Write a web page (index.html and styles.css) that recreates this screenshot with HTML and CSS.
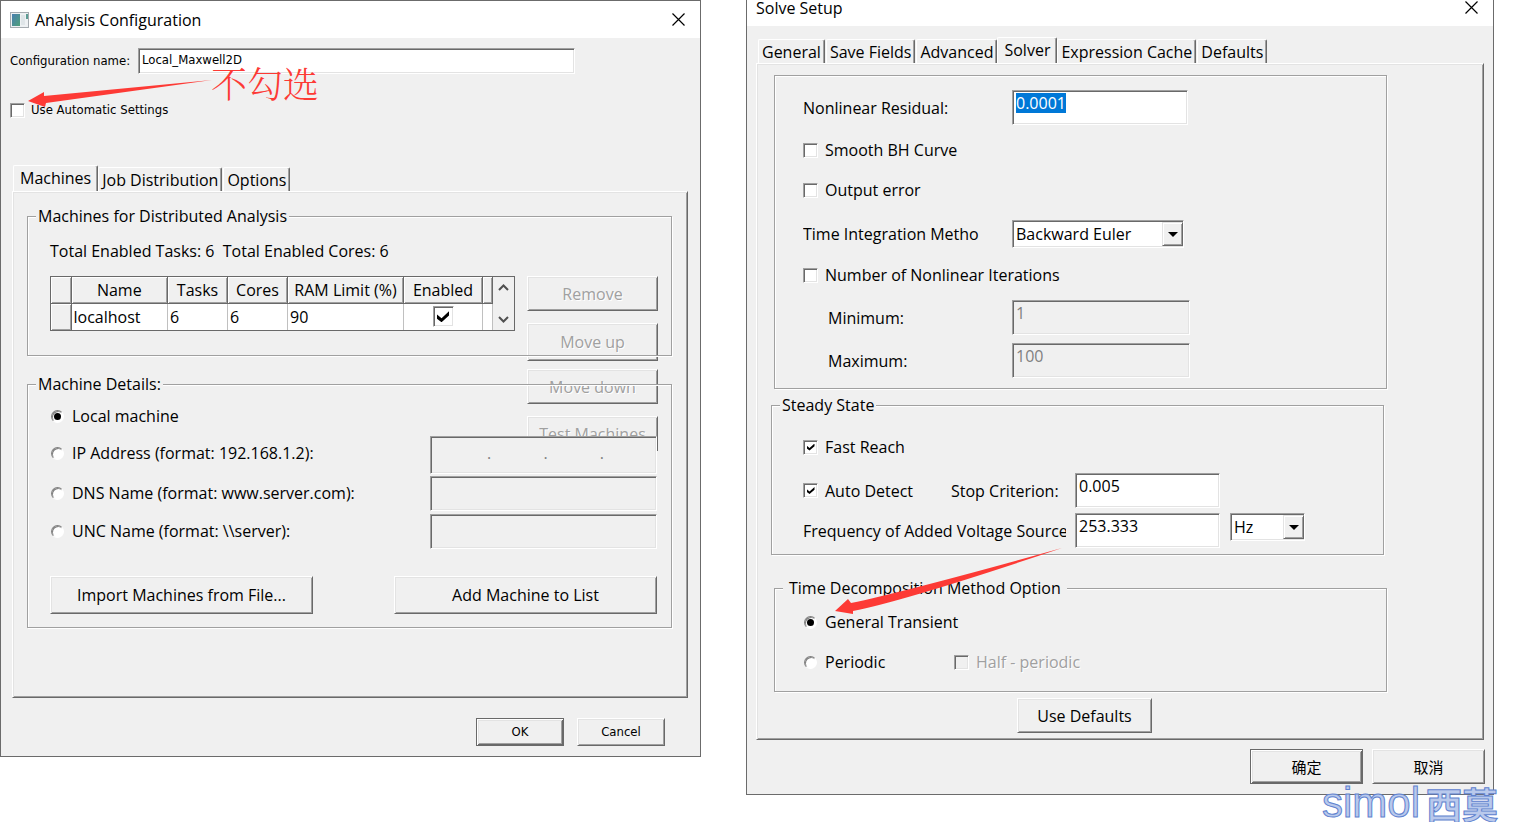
FILE: index.html
```html
<!DOCTYPE html>
<html lang="en">
<head>
<meta charset="utf-8">
<title>Analysis Configuration and Solve Setup</title>
<link rel="stylesheet" href="styles.css">
</head>
<body>
<main class="desktop">
  <section class="dialog dialog-analysis" aria-label="Analysis Configuration">
    <header class="titlebar">
      <svg class="app-icon" width="19" height="16" viewBox="0 0 19 16" aria-hidden="true">
        <defs><linearGradient id="scr" x1="0" y1="0" x2="1" y2="1"><stop offset="0" stop-color="#4a7fb0"/><stop offset="1" stop-color="#4fa07a"/></linearGradient></defs>
        <rect x="0.5" y="0.5" width="18" height="15" fill="#eef1f3" stroke="#a5abb0"/>
        <rect x="2" y="2" width="8" height="12" fill="url(#scr)"/>
        <rect x="11" y="3" width="4" height="10" fill="#dfe5e8"/>
        <rect x="16" y="2" width="2" height="5" fill="#5c9c94"/>
      </svg>
      <h1 class="title">Analysis Configuration</h1>
      <button class="close" type="button" aria-label="Close"><svg width="13" height="13" viewBox="0 0 13 13"><path d="M.5.5l12 12M12.5.5l-12 12" stroke="#000" stroke-width="1.2"/></svg></button>
    </header>
    <div class="small config-row">
      <label class="config-label" for="cfg">Configuration name:</label>
      <input class="sunken config-input" id="cfg" type="text" value="Local_Maxwell2D">
    </div>
    <label class="small check auto-row"><input type="checkbox">Use Automatic Settings</label>
    <div class="tabs" role="tablist">
      <button class="tab selected" type="button" role="tab">Machines</button>
      <button class="tab" type="button" role="tab">Job Distribution</button>
      <button class="tab" type="button" role="tab">Options</button>
    </div>
    <div class="panel machines-panel">
      <fieldset class="group machines-group">
        <legend>Machines for Distributed Analysis</legend>
        <p class="totals">Total Enabled Tasks: 6&nbsp; Total Enabled Cores: 6</p>
        <div class="machines-row">
          <div class="grid-box">
            <table class="machines">
              <colgroup><col class="c-head"><col><col class="c-num"><col class="c-num"><col class="c-ram"><col class="c-en"><col class="c-rest"></colgroup>
              <thead><tr><th></th><th>Name</th><th>Tasks</th><th>Cores</th><th>RAM Limit (%)</th><th>Enabled</th><th></th></tr></thead>
              <tbody><tr><th></th><td>localhost</td><td>6</td><td>6</td><td>90</td><td class="mid"><input class="big" type="checkbox" checked aria-label="Enabled"></td><td></td></tr></tbody>
            </table>
            <div class="scroll">
              <svg width="11" height="7" viewBox="0 0 11 7" aria-hidden="true"><path d="M1 6l4.500-4.500L10 6" fill="none" stroke="#505050" stroke-width="2"/></svg>
              <svg width="11" height="7" viewBox="0 0 11 7" aria-hidden="true"><path d="M1 1l4.500 4.500L10 1" fill="none" stroke="#505050" stroke-width="2"/></svg>
            </div>
          </div>
          <div class="side-buttons">
            <button class="btn" type="button" disabled>Remove</button>
            <button class="btn move-up" type="button" disabled>Move up</button>
            <button class="btn" type="button" disabled>Move down</button>
            <button class="btn" type="button" disabled>Test Machines</button>
          </div>
        </div>
      </fieldset>
      <fieldset class="group details-group">
        <legend>Machine Details:</legend>
        <label class="check local-row"><input type="radio" name="m" checked>Local machine</label>
        <div class="details">
          <label class="check"><input type="radio" name="m">IP Address (format: 192.168.1.2):</label>
          <div class="sunken off ip" role="group" aria-label="IP address">
            <input type="text" disabled aria-label="Part 1"><span>.</span><input type="text" disabled aria-label="Part 2"><span>.</span><input type="text" disabled aria-label="Part 3"><span>.</span><input type="text" disabled aria-label="Part 4">
          </div>
          <label class="check"><input type="radio" name="m">DNS Name (format: www.server.com):</label>
          <input class="sunken off" type="text" disabled aria-label="DNS name">
          <label class="check"><input type="radio" name="m">UNC Name (format: \\server):</label>
          <input class="sunken off" type="text" disabled aria-label="UNC name">
        </div>
        <div class="detail-buttons">
          <button class="btn" type="button">Import Machines from File...</button>
          <button class="btn" type="button">Add Machine to List</button>
        </div>
      </fieldset>
    </div>
    <footer class="small footer">
      <button class="btn default" type="button">OK</button>
      <button class="btn" type="button">Cancel</button>
    </footer>
    <svg class="arrow arrow-auto" width="186" height="32" viewBox="0 0 186 32" aria-hidden="true"><path d="M1 24L17 15V19L185 3L19 26L18 30Z" fill="#fd3a35"/></svg>
    <span class="note" lang="zh">不勾选</span>
  </section>

  <section class="dialog dialog-solve" aria-label="Solve Setup">
    <header class="titlebar">
      <h1 class="title">Solve Setup</h1>
      <button class="close" type="button" aria-label="Close"><svg width="13" height="13" viewBox="0 0 13 13"><path d="M.5.5l12 12M12.500.5l-12 12" stroke="#000" stroke-width="1.2"/></svg></button>
    </header>
    <div class="tabs" role="tablist">
      <button class="tab" type="button" role="tab">General</button>
      <button class="tab" type="button" role="tab">Save Fields</button>
      <button class="tab" type="button" role="tab">Advanced</button>
      <button class="tab selected" type="button" role="tab">Solver</button>
      <button class="tab" type="button" role="tab">Expression Cache</button>
      <button class="tab" type="button" role="tab">Defaults</button>
    </div>
    <div class="panel solver-panel">
      <div class="group solver-group">
        <div class="field-row"><label for="res">Nonlinear Residual:</label><input class="sunken highlighted" id="res" type="text" value="0.0001"></div>
        <label class="check line first"><input type="checkbox">Smooth BH Curve</label>
        <label class="check line"><input type="checkbox">Output error</label>
        <div class="field-row method-row"><label class="cut" for="tim">Time Integration Method:</label>
          <div class="sunken combo"><select id="tim"><option>Backward Euler</option></select><span class="drop"></span></div></div>
        <label class="check iterations"><input type="checkbox">Number of Nonlinear Iterations</label>
        <div class="field-row nested"><label for="mn">Minimum:</label><input class="sunken off" id="mn" type="text" value="1" disabled></div>
        <div class="field-row nested"><label for="mx">Maximum:</label><input class="sunken off" id="mx" type="text" value="100" disabled></div>
      </div>
      <fieldset class="group steady-group">
        <legend>Steady State</legend>
        <label class="check line"><input type="checkbox" checked>Fast Reach</label>
        <div class="steady">
          <div class="steady-left"><label class="check"><input type="checkbox" checked>Auto Detect</label><label for="stop">Stop Criterion:</label></div>
          <input class="sunken" id="stop" type="text" value="0.005"><span></span>
          <label class="cut" for="freq">Frequency of Added Voltage Source:</label>
          <input class="sunken" id="freq" type="text" value="253.333">
          <div class="sunken combo"><select aria-label="Unit"><option>Hz</option></select><span class="drop"></span></div>
        </div>
      </fieldset>
      <fieldset class="group time-group">
        <legend>Time Decomposition Method Option</legend>
        <label class="check line"><input type="radio" name="t" checked>General Transient</label>
        <div class="periodic line">
          <label class="check"><input type="radio" name="t">Periodic</label>
          <label class="check disabled"><input type="checkbox" disabled>Half - periodic</label>
        </div>
      </fieldset>
      <button class="btn use-defaults" type="button">Use Defaults</button>
    </div>
    <footer class="footer" lang="zh">
      <button class="btn default" type="button">确定</button>
      <button class="btn" type="button">取消</button>
    </footer>
    <svg class="arrow arrow-general" width="230" height="68" viewBox="0 0 230 68" aria-hidden="true"><path d="M2 63L15 51L18 55Q75 43 229 0Q75 52 20 63L20 66Z" fill="#fd3a35"/></svg>
    <div class="watermark"><span class="wm-latin">simol</span><span class="wm-han" lang="zh">西莫</span></div>
  </section>
</main>
</body>
</html>
```
FILE: styles.css
```css
* { box-sizing: border-box; }

body {
  margin: 0;
  min-height: 100vh;
  background: #fff;
  color: #000;
  font: 16px/20px "Open Sans", "Noto Sans CJK SC", sans-serif;
}

button, input, select { font: inherit; color: inherit; margin: 0; border-radius: 0; }

.desktop {
  display: grid;
  grid-template-columns: minmax(0, 701fr) minmax(0, 748fr);
  column-gap: 45px;
  align-items: start;
  padding-right: 22px;
}

.dialog {
  position: relative;
  border: 1px solid #6b6b6b;
  background: #f0f0f0;
}
.dialog-analysis { padding-bottom: 10px; }
.dialog-solve { border-top: 0; padding-bottom: 10px; }

.titlebar {
  display: flex;
  align-items: center;
  background: #fff;
  height: 37px;
  padding: 0 15px 0 9px;
}
.dialog-solve .titlebar { height: 26px; align-items: flex-start; }
.dialog-solve .title { line-height: 16px; }
.app-icon { margin-right: 6px; }
.title { margin: 0; font-size: 16px; font-weight: 400; flex: 1; }
.close { display: flex; padding: 0; border: 0; background: none; }
.dialog-solve .close { padding-top: 1px; }

/* Bevels */
.sunken, input[type="checkbox"] {
  border: 1px solid;
  border-color: #a0a0a0 #fff #fff #a0a0a0;
  box-shadow: inset 1px 1px #696969, inset -1px -1px #e3e3e3;
  background: #fff;
}
.sunken { width: 100%; min-width: 0; outline: 0; height: 35px; padding: 0 3px 9px; }
.sunken.off { background: #f0f0f0; color: #808080; }

.btn, .panel {
  border: 1px solid;
  border-color: #fff #696969 #696969 #fff;
  box-shadow: inset 1px 1px #e3e3e3, inset -1px -1px #a0a0a0;
  background: #f0f0f0;
}
.btn { padding: 0; }
.btn.default {
  border-color: #696969;
  box-shadow: inset 1px 1px #fff, inset -1px -1px #696969, inset 2px 2px #e3e3e3, inset -2px -2px #a0a0a0;
}
.btn:disabled, .disabled { color: #a0a0a0; text-shadow: 1px 1px #fff; }

/* Check boxes and radios */
.check { display: flex; align-items: center; }
input[type="checkbox"], input[type="radio"] {
  appearance: none;
  display: grid;
  place-items: center;
  flex: none;
  width: 15px;
  height: 15px;
  margin-right: 7px;
}
input[type="checkbox"]:disabled { background: #f0f0f0; }
input[type="checkbox"]:checked::before {
  content: "";
  width: 8px;
  height: 7px;
  background: #000;
  clip-path: polygon(0 30%, 38% 64%, 100% 0, 100% 38%, 38% 100%, 0 68%);
}
input.big { width: 21px; height: 21px; margin: 0 auto; }
input.big:checked::before { width: 12px; height: 11px; }
input[type="radio"] {
  width: 13px;
  height: 13px;
  margin: 0 8px 0 1px;
  border: 1px solid;
  border-color: #808080 #fff #fff #808080;
  border-radius: 50%;
  box-shadow: inset 1px 1px #808080;
  background: #fff;
}
input[type="radio"]:checked::before {
  content: "";
  width: 7px;
  height: 7px;
  border-radius: 50%;
  background: #000;
}

/* Tabs */
.tabs { display: flex; align-items: flex-end; }
.tab {
  height: 24px;
  padding: 0 3px;
  border: 1px solid;
  border-color: #fff #696969 #f0f0f0 #fff;
  border-bottom: 0;
  border-radius: 2px 2px 0 0;
  box-shadow: inset -1px 0 #a0a0a0;
  background: #f0f0f0;
  white-space: nowrap;
}
.tab + .tab { margin-left: 1px; }
.tab.selected { position: relative; height: 28px; margin: 0 0 -2px; padding: 0 6px 4px; }
.tab.selected + .tab { margin-left: 0; }

.panel { isolation: isolate; }

/* Group boxes */
.group {
  min-width: 0;
  margin: 0;
  border: 1px solid #a0a0a0;
  box-shadow: 1px 1px #fff, inset 1px 1px #fff;
}
.group legend { height: 20px; padding: 0 2px; background: #f0f0f0; }

/* Analysis Configuration */
.small { font: 13px/16px "DejaVu Sans Condensed", "DejaVu Sans", sans-serif; }
.config-row { display: flex; align-items: center; padding: 10px 125px 0 9px; }
.config-label { width: 128px; flex: none; }
.config-input { height: 26px; padding: 0 3px 3px; }
.auto-row { margin: 28px 9px 0; }
.auto-row input { margin-right: 6px; }
.dialog-analysis .tabs { padding: 47px 12px 0; }
.machines-panel { margin: 0 12px 0 11px; padding: 14px 15px 69px 14px; }
.machines-group { padding: 0 13px 24px 22px; }
.machines-group legend, .details-group legend { margin-left: -14px; }
.totals { margin: 15px 0; }
.machines-row { display: flex; justify-content: space-between; gap: 12px; }
.grid-box { display: flex; flex: 1; height: 55px; border: 1px solid #696969; background: #fff; }
.machines { flex: 1; border-collapse: collapse; table-layout: fixed; height: 53px; }
.machines th, .machines td { height: 26px; padding: 0; font-weight: 400; }
.machines td { padding-left: 2px; border-right: 1px solid #c0c0c0; }
.machines th {
  border-right: 1px solid #696969;
  border-bottom: 1px solid #696969;
  box-shadow: inset 1px 1px #fff, inset -1px -1px #a0a0a0;
  background: #f0f0f0;
  white-space: nowrap;
}
.machines tbody th { border-bottom: 0; }
.machines .mid { padding: 0; }
.c-head { width: 20px; }
.c-num { width: 60px; }
.c-ram { width: 116px; }
.c-en { width: 79px; }
.c-rest { width: 10px; }
.scroll {
  display: flex;
  flex-direction: column;
  justify-content: space-between;
  align-items: center;
  width: 21px;
  padding: 7px 0;
  background: #f0f0f0;
}
/* The button column runs on under the frames below it. */
.side-buttons {
  display: flex;
  flex-direction: column;
  gap: 12px;
  width: 131px;
  margin-bottom: -121px;
  z-index: -1;
}
.side-buttons .btn { flex: none; height: 35px; }
.side-buttons .move-up { height: 38px; margin-bottom: -4px; }

.details-group { margin-top: 18px; padding: 0 14px 13px 22px; }
.local-row { height: 24px; margin-top: 10px; }
.details {
  display: grid;
  grid-template-columns: 1fr 227px;
  grid-template-rows: 38px 36px 35px;
  row-gap: 2px;
  margin-top: 8px;
}
.details .check { height: 34px; }
.ip { display: flex; align-items: center; height: 38px; padding: 0 0 4px 4px; }
.ip input { flex: 1; min-width: 0; width: 0; border: 0; padding: 0; background: none; }
.detail-buttons { display: flex; justify-content: space-between; gap: 12px; margin-top: 27px; }
.detail-buttons .btn { width: 263px; height: 38px; }

.footer { display: flex; justify-content: flex-end; }
.footer.small { gap: 13px; padding: 20px 35px 0; }
.footer.small .btn { width: 88px; height: 28px; }

.arrow, .note { position: absolute; pointer-events: none; }
.arrow-auto { left: 26px; top: 76px; }
.note {
  left: 210px;
  top: 60px;
  color: #fd3a35;
  font: 300 36px/44px "Noto Serif CJK SC", "Noto Sans CJK SC", serif;
}

/* Solve Setup */
.dialog-solve .tabs { padding: 11px 11px 0; }
.solver-panel { margin: 0 9px; padding: 11px 97px 6px 14px; }
.solver-group { margin: 0 -1px 0 3px; padding: 14px 28px 10px; }
.field-row { display: grid; grid-template-columns: 209px 176px; align-items: center; }
.line { height: 40px; }
.line.first { margin-top: 5px; }
.field-row.method-row { height: 48px; }
.iterations { height: 34px; }
.cut { overflow: hidden; white-space: nowrap; text-overflow: clip; }
.field-row .cut { width: 176px; }
.field-row .combo { width: 172px; }
.field-row.nested { grid-template-columns: 184px 178px; margin: 8px 0 0 25px; }
.highlighted {
  color: #fff;
  background: linear-gradient(#0078d7, #0078d7) 3px 2px / 50px 20px no-repeat #fff;
}

.combo { display: flex; height: 28px; padding: 1px 0 1px 1px; }
.combo select { flex: 1; min-width: 0; appearance: none; border: 0; padding: 0 2px; background: none; outline: 0; }
.drop {
  display: grid;
  place-items: center;
  width: 21px;
  border: 1px solid;
  border-color: #e3e3e3 #696969 #696969 #e3e3e3;
  box-shadow: inset 1px 1px #fff, inset -1px -1px #a0a0a0;
  background: #f0f0f0;
}
.drop::before { content: ""; border: 5px solid transparent; border-top-color: #000; border-bottom: 0; }

.steady-group { margin: 6px 2px 0 0; padding: 0 31px 6px; }
.steady-group legend { margin-left: -23px; }
.steady-group .line { margin-top: 12px; }
.steady {
  display: grid;
  grid-template-columns: 272px 145px 75px;
  gap: 5px 0;
  margin-top: 6px;
}
.steady .sunken { height: 35px; }
.steady label { align-self: center; }
.steady .cut { width: 263px; }
.steady .combo { width: 75px; height: 28px; margin-left: 10px; }
.steady-left { display: grid; grid-template-columns: 148px 1fr; align-items: center; }

.time-group { margin: 23px -1px 0 3px; padding: 0 28px 9px; }
.time-group legend { margin-left: -20px; padding: 0 6px; }
.time-group > label.line { margin-top: 4px; }
.periodic { display: grid; grid-template-columns: 151px 1fr; align-items: center; }
.use-defaults { display: block; width: 135px; height: 35px; margin: 6px 0 0 246px; }

.dialog-solve .footer { gap: 9px; padding: 9px 8px 0; font-size: 15px; }
.dialog-solve .footer .btn { width: 113px; height: 35px; }
.arrow-general { left: 86px; top: 548px; }

.watermark {
  position: absolute;
  right: -5px;
  bottom: -27px;
  display: flex;
  align-items: center;
  gap: 6px;
  color: #b9c9ec;
  -webkit-text-stroke: 1px #5f82cf;
  white-space: nowrap;
}
.wm-latin { font: 42px/36px "Liberation Sans", sans-serif; }
.wm-han { font: 700 36px/36px "Noto Sans CJK SC", sans-serif; }
```
